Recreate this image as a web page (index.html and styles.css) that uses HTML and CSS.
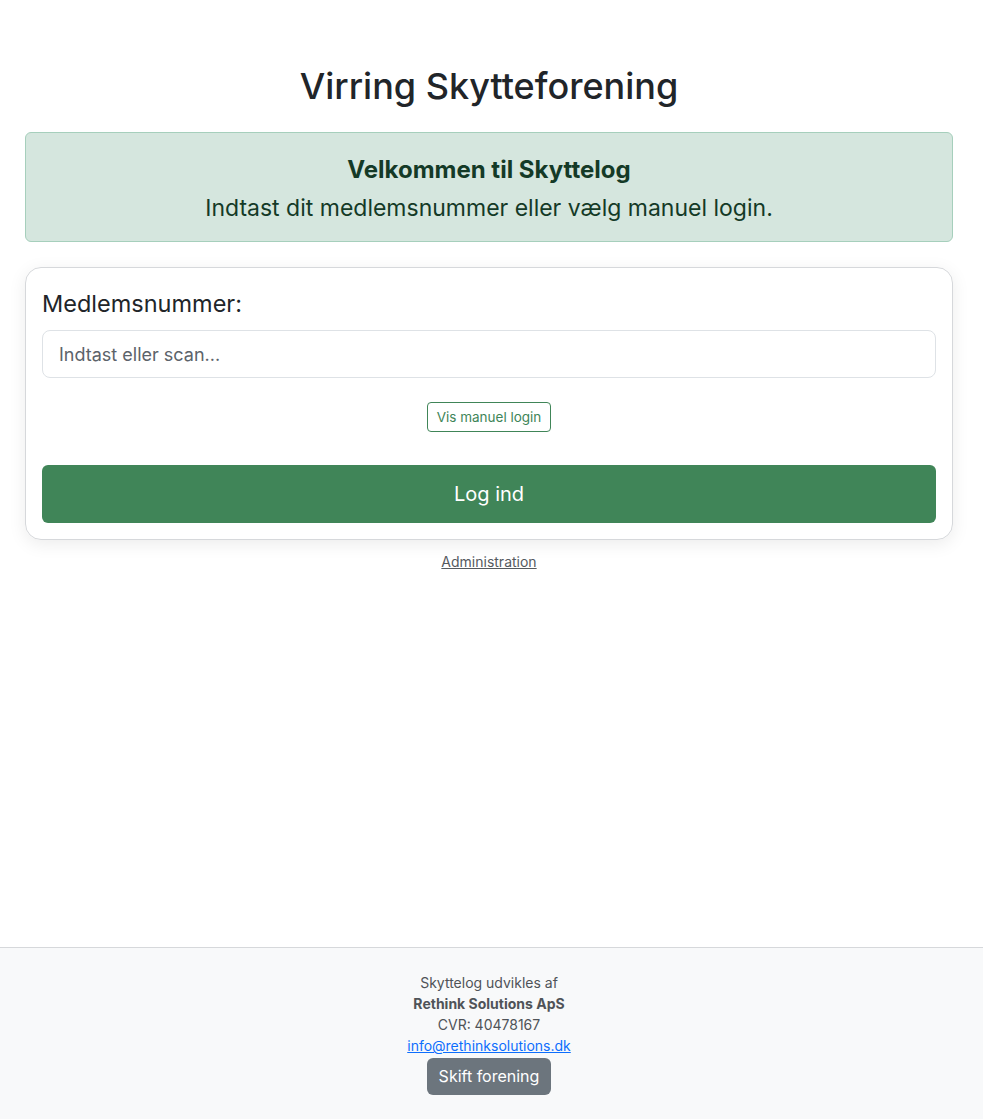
FILE: index.html
```html
<!DOCTYPE html>
<html lang="da">
<head>
    <meta charset="UTF-8">
    <meta name="viewport" content="width=device-width, initial-scale=1.0">
    <title>Skyttelog - Virring Skytteforening</title>
    <link rel="stylesheet" href="styles.css">
</head>
<body>

<main class="container">
    <h1>Virring Skytteforening</h1>

    <div class="alert">
        <div class="alert-title">Velkommen til Skyttelog</div>
        <div class="alert-text">Indtast dit medlemsnummer eller vælg manuel login.</div>
    </div>

    <form class="card" id="loginForm">
        <label for="member">Medlemsnummer:</label>
        <input type="text" id="member" name="member" placeholder="Indtast eller scan...">

        <div class="manual-row">
            <button type="button" class="btn-outline">Vis manuel login</button>
        </div>

        <button type="submit" class="btn-login">Log ind</button>
    </form>

    <div class="admin-link">
        <a href="#">Administration</a>
    </div>
</main>

<footer class="footer">
    <div>Skyttelog udvikles af</div>
    <div><strong>Rethink Solutions ApS</strong></div>
    <div>CVR: 40478167</div>
    <div><a href="#">info@rethinksolutions.dk</a></div>
    <button type="button" class="btn-secondary">Skift forening</button>
</footer>

</body>
</html>
```

FILE: styles.css
```css
* {
    box-sizing: border-box;
}

body {
    font-family: Inter, "Noto Sans", Arial, sans-serif;
    margin: 0;
    padding: 0;
    color: #212529;
    background: #fff;
    font-size: 16px;
    line-height: 1.5;
    min-height: 100vh;
    display: flex;
    flex-direction: column;
}

.container {
    width: 100%;
    padding: 62px 30px 0 25px;
    flex: 1;
}

h1 {
    text-align: center;
    font-size: 36px;
    font-weight: 500;
    line-height: 48px;
    margin: 0 0 22px;
}

.alert {
    background-color: #d5e6de;
    border: 1px solid #a6cfbc;
    border-radius: 6px;
    color: #143a27;
    text-align: center;
    padding: 20px 16px 16px;
    margin-bottom: 25px;
}

.alert-title {
    font-size: 24px;
    font-weight: 700;
    line-height: 34px;
    margin-bottom: 4px;
}

.alert-text {
    font-size: 23px;
    line-height: 34px;
}

.card {
    border: 1px solid #d6d8db;
    border-radius: 16px;
    box-shadow: 0 4px 18px rgba(0, 0, 0, 0.08);
    padding: 20px 16px 16px;
    display: flex;
    flex-direction: column;
}

label {
    font-size: 23.5px;
    line-height: 32px;
    margin-bottom: 10px;
}

input {
    width: 100%;
    height: 48px;
    padding: 8px 16px;
    font-family: inherit;
    font-size: 18px;
    border: 1px solid #dee2e6;
    border-radius: 8px;
    color: #212529;
}

input::placeholder {
    color: #5c636a;
}

.manual-row {
    text-align: center;
    margin: 24px 0 33px;
}

.btn-outline {
    font-family: inherit;
    font-size: 13.5px;
    line-height: 20px;
    padding: 4px 9px;
    background: #fff;
    color: #408558;
    border: 1px solid #408558;
    border-radius: 4px;
    cursor: pointer;
}

.btn-login {
    width: 100%;
    height: 58px;
    font-family: inherit;
    font-size: 20px;
    color: #fff;
    background-color: #408558;
    border: none;
    border-radius: 6px;
    cursor: pointer;
}

.admin-link {
    text-align: center;
    margin-top: 11px;
    font-size: 14px;
}

.admin-link a {
    color: #555a5f;
}

.footer {
    border-top: 1px solid #d6d8db;
    background-color: #f8f9fa;
    text-align: center;
    padding: 24px 5px 24px 0;
    font-size: 14px;
    line-height: 21px;
    color: #4f5358;
}

.footer strong {
    font-weight: 700;
}

.footer a {
    color: #0d6efd;
}

.btn-secondary {
    margin-top: 2px;
    font-family: inherit;
    font-size: 16px;
    line-height: 25px;
    padding: 6px 12px;
    color: #fff;
    background-color: #6c757d;
    border: none;
    border-radius: 6px;
    cursor: pointer;
}
```
